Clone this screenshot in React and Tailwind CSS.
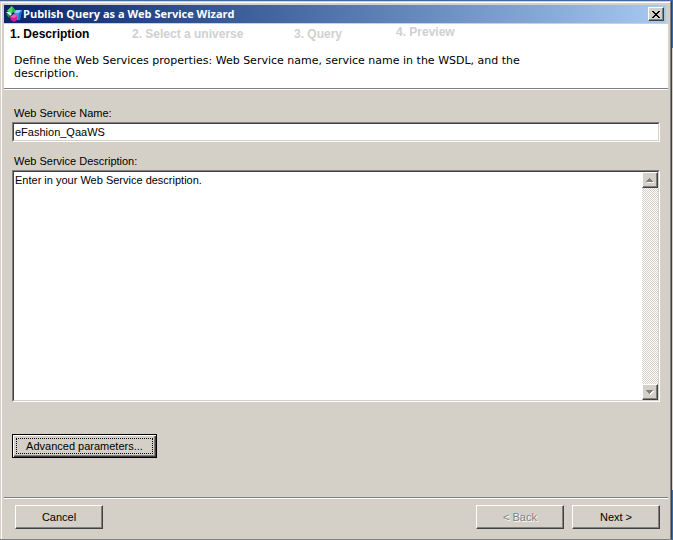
import { useState } from "react";

const steps = [
  { label: "1. Description", className: "w-[122px] pt-[3px] text-black" },
  { label: "2. Select a universe", className: "w-[162px] pt-[3px] text-[#d0d0d0]" },
  { label: "3. Query", className: "w-[102px] pt-[3px] text-[#d0d0d0]" },
  { label: "4. Preview", className: "pt-px text-[#d0d0d0]" },
];

const raised =
  "border border-t-white border-l-white border-r-[#404040] border-b-[#404040] bg-[#d4d0c8] shadow-[inset_-1px_-1px_0_#808080]";

const sunken =
  "border border-t-[#808080] border-l-[#808080] border-r-white border-b-white";

const sunkenInner =
  "border border-t-[#404040] border-l-[#404040] border-r-[#d4d0c8] border-b-[#d4d0c8] bg-white";

const arrowUp = "M3 0h1v1h1v1h1v1h1v1h-7v-1h1v-1h1v-1h1z";
const arrowDown = "M0 0h7v1h-1v1h-1v1h-1v1h-1v-1h-1v-1h-1v-1h-1z";

function WizardIcon() {
  return (
    <svg width="16" height="16" viewBox="0 0 16 16" aria-hidden="true">
      {/* blue box */}
      <path d="M8 5 L10 4 L16 4 L14 14 L9 14 Z" fill="#3c96ee" />
      <path d="M8 5 L10 4 L16 4 L13 7 L9 7 Z" fill="#8accfa" />
      <path d="M13 7 L16 4 L14 13 L12 14 Z" fill="#2468c8" />
      {/* green diamond */}
      <path d="M6 0 L10 5 L6 7 L1 5 Z" fill="#1fc043" />
      <path d="M6 0 L6 7 L1 5 Z" fill="#4fdc68" />
      <path d="M0 6 L4 6 L6 8 L4 10 Z" fill="#d9f7dc" />
      <path d="M0 8 L4 9 L3 12 Z" fill="#12a035" />
      {/* magenta gem */}
      <path d="M4 11 L8 8 L11 10 L11 14 L8 16 L5 14 Z" fill="#d81b94" />
      <path d="M4 11 L8 8 L11 10 L8 12 Z" fill="#ee5cb8" />
    </svg>
  );
}

function ScrollButton({ label, path }) {
  return (
    <button
      type="button"
      aria-label={label}
      className={`flex h-4 w-4 shrink-0 items-center justify-center ${raised}`}
    >
      <svg width="8" height="5" viewBox="0 0 8 5" shapeRendering="crispEdges">
        <path d={path} fill="#fff" transform="translate(1 1)" />
        <path d={path} fill="#808080" />
      </svg>
    </button>
  );
}

export default function App() {
  const [name, setName] = useState("eFashion_QaaWS");
  const [description, setDescription] = useState(
    "Enter in your Web Service description."
  );

  return (
    <div className="flex min-h-screen bg-[#d4d0c8] font-['Liberation_Sans',Arial,sans-serif] text-[11px] leading-[14px] text-black">
      <div className="flex min-w-0 flex-1 flex-col border-t border-t-[#49679d]">
        <main className="flex flex-1 flex-col border-r border-b border-r-[#404040] border-b-[#808080]">
          <div className="flex flex-1 flex-col border-t border-r border-l border-t-[#d4d0c8] border-r-[#808080] border-l-[#d4d0c8]">
            <div className="flex flex-1 flex-col border-t border-l border-white pt-[2px] pr-[2px] pl-[2px]">
              {/* Title bar */}
              <header className="mr-[2px] flex h-[18px] items-center bg-linear-to-r from-[#0a246a] to-[#a6caf0] pr-[2px] pl-[2px]">
                <WizardIcon />
                <h1 className="ml-[1px] flex-1 font-['Open_Sans','Noto_Sans',sans-serif] text-[11px] font-bold whitespace-nowrap text-white">
                  Publish Query as a Web Service Wizard
                </h1>
                <button
                  type="button"
                  aria-label="Close"
                  className={`flex h-[14px] w-4 items-center justify-center ${raised}`}
                >
                  <svg width="8" height="7" viewBox="0 0 8 7" shapeRendering="crispEdges">
                    <path
                      d="M0 0h2v1h1v1h2v-1h1v-1h2v1h-1v1h-1v1h-1v1h1v1h1v1h1v1h-2v-1h-1v-1h-2v1h-1v1h-2v-1h1v-1h1v-1h1v-1h-1v-1h-1v-1h-1z"
                      fill="#000"
                    />
                  </svg>
                </button>
              </header>

              {/* Wizard steps */}
              <section className="mt-px h-[65px] border-b border-[#808080] bg-white pl-[6px]">
                <ol className="flex h-[30px] text-[12px] font-bold whitespace-nowrap">
                  {steps.map((step) => (
                    <li key={step.label} className={step.className}>
                      {step.label}
                    </li>
                  ))}
                </ol>
                <p className="max-w-[560px] pl-1 font-['DejaVu_Sans',Verdana,sans-serif] text-[11px] leading-[13px]">
                  Define the Web Services properties: Web Service name, service
                  name in the WSDL, and the description.
                </p>
              </section>

              {/* Form */}
              <section className="flex flex-1 flex-col border-t border-white pt-4 pr-2 pl-2">
                <label htmlFor="service-name" className="pl-[2px]">
                  Web Service Name:
                </label>
                <div className={`mt-[2px] ${sunken}`}>
                  <input
                    id="service-name"
                    type="text"
                    value={name}
                    onChange={(e) => setName(e.target.value)}
                    className={`block h-[18px] w-full px-px outline-none ${sunkenInner}`}
                  />
                </div>

                <label htmlFor="service-description" className="mt-3 pl-[2px]">
                  Web Service Description:
                </label>
                <div className={`mt-[2px] flex flex-1 ${sunken}`}>
                  <div className={`flex flex-1 ${sunkenInner}`}>
                    <textarea
                      id="service-description"
                      value={description}
                      onChange={(e) => setDescription(e.target.value)}
                      className="min-w-0 flex-1 resize-none px-px pt-px outline-none"
                    />
                    <div className="flex w-4 flex-col justify-between bg-[conic-gradient(#fff_25%,#d4d0c8_0_50%,#fff_0_75%,#d4d0c8_0)] bg-size-[2px_2px]">
                      <ScrollButton label="Scroll up" path={arrowUp} />
                      <ScrollButton label="Scroll down" path={arrowDown} />
                    </div>
                  </div>
                </div>

                <div className="mt-8 mb-[39px]">
                  <button
                    type="button"
                    className="h-6 w-[145px] border border-black bg-[#d4d0c8] p-px shadow-[inset_1px_1px_0_#fff,inset_-1px_-1px_0_#404040,inset_-2px_-2px_0_#808080]"
                  >
                    <span className="mx-[2px] block border border-dotted border-black">
                      Advanced parameters...
                    </span>
                  </button>
                </div>
              </section>

              {/* Navigation */}
              <footer className="border-t border-[#808080]">
                <div className="flex gap-2 border-t border-white pt-[6px] pr-2 pb-[10px] pl-[11px]">
                  <button type="button" className={`mr-auto h-6 w-[88px] ${raised}`}>
                    Cancel
                  </button>
                  <button
                    type="button"
                    disabled
                    className={`h-6 w-[88px] text-[#808080] text-shadow-[1px_1px_0_#fff] ${raised}`}
                  >
                    &lt; Back
                  </button>
                  <button type="button" className={`h-6 w-[88px] ${raised}`}>
                    Next &gt;
                  </button>
                </div>
              </footer>
            </div>
          </div>
        </main>
      </div>
      {/* Sliver of the desktop behind the window */}
      <div className="flex w-px flex-col bg-[#3a6ea5]">
        <div className="h-12" />
        <div className="h-[442px] bg-[#d4d0c8]" />
      </div>
    </div>
  );
}
